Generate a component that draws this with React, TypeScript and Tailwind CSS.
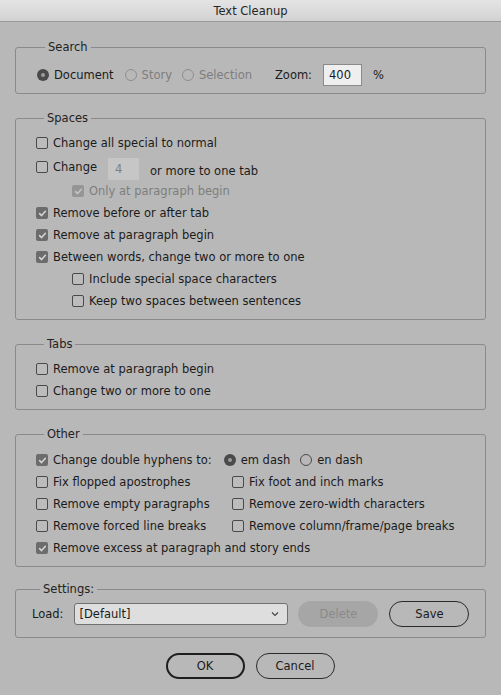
import React from "react";

const font = { fontFamily: '"DejaVu Sans", "Liberation Sans", sans-serif' };

function Check({ checked = false, disabled = false }: { checked?: boolean; disabled?: boolean }) {
  if (checked) {
    return (
      <span
        className={`flex h-[12px] w-[12px] shrink-0 items-center justify-center rounded-[2px] ${
          disabled ? "bg-[#959595]" : "bg-[#6c6c6c]"
        }`}
      >
        <svg width="9" height="9" viewBox="0 0 9 9">
          <path
            d="M1.6 4.6 L3.6 6.6 L7.4 2.2"
            fill="none"
            stroke={disabled ? "#c4c4c4" : "#d6d6d6"}
            strokeWidth="1.5"
            strokeLinecap="round"
            strokeLinejoin="round"
          />
        </svg>
      </span>
    );
  }
  return (
    <span
      className={`block h-[12px] w-[12px] shrink-0 rounded-[2px] border bg-[#bcbcbc] ${
        disabled ? "border-[#8c8c8c]" : "border-[#4a4a4a]"
      }`}
    />
  );
}

function Radio({ on = false, disabled = false }: { on?: boolean; disabled?: boolean }) {
  if (on) {
    return (
      <span className="flex h-[12px] w-[12px] shrink-0 items-center justify-center rounded-full bg-[#4a4a4a]">
        <span className="block h-[4px] w-[4px] rounded-full bg-[#9c9c9c]" />
      </span>
    );
  }
  return (
    <span
      className={`block h-[12px] w-[12px] shrink-0 rounded-full border ${
        disabled ? "border-[#8e8e8e]" : "border-[#4a4a4a]"
      }`}
    />
  );
}

function Row({
  checked,
  disabled,
  label,
  indent,
}: {
  checked?: boolean;
  disabled?: boolean;
  label: string;
  indent?: boolean;
}) {
  return (
    <div className={`flex h-[22px] items-center gap-[5px] ${indent ? "pl-[36px]" : ""}`}>
      <Check checked={checked} disabled={disabled} />
      <span className={disabled ? "text-[#7e7e7e]" : "text-[#1b1b1b]"}>{label}</span>
    </div>
  );
}

function Group({
  title,
  children,
  className = "",
}: {
  title: string;
  children: React.ReactNode;
  className?: string;
}) {
  return (
    <fieldset className={`rounded-[3px] border border-[#8a8a8a] ${className}`}>
      <legend className="ml-[8px] px-[3px] text-[11.5px] leading-[14px] text-[#222]">{title}</legend>
      {children}
    </fieldset>
  );
}

export default function App() {
  return (
    <div className="h-[695px] w-[501px] overflow-hidden bg-[#b8b8b8] text-[11.5px] leading-[14px]" style={font}>
      <div className="flex h-[22px] items-center justify-center border-b border-[#999] bg-gradient-to-b from-[#e4e4e4] to-[#d2d2d2] text-[11.5px] text-[#262626]">
        Text Cleanup
      </div>

      <div className="px-[15px]">
        <Group title="Search" className="mt-[18px] pb-[7px] pt-[10px] pl-[21px]">
          <div className="flex h-[22px] items-center">
            <Radio on />
            <span className="ml-[5px] text-[#1b1b1b]">Document</span>
            <span className="ml-[11px]">
              <Radio disabled />
            </span>
            <span className="ml-[5px] text-[#7e7e7e]">Story</span>
            <span className="ml-[10px]">
              <Radio disabled />
            </span>
            <span className="ml-[5px] text-[#7e7e7e]">Selection</span>
            <span className="ml-[23px] text-[#1b1b1b]">Zoom:</span>
            <span className="ml-[11px] flex h-[22px] w-[39px] items-center border border-[#8a8a8a] bg-[#efefef] pl-[5px] text-[#1b1b1b]">
              400
            </span>
            <span className="ml-[11px] text-[#1b1b1b]">%</span>
          </div>
        </Group>

        <Group title="Spaces" className="mt-[17px] pb-[7px] pt-[7px] pl-[20px]">
          <Row label="Change all special to normal" />
          <div className="flex h-[26px] items-start">
            <div className="mt-[6px] flex items-center gap-[5px]">
              <Check />
              <span className="text-[#1b1b1b]">Change</span>
            </div>
            <span className="ml-[11px] mt-[4px] flex h-[22px] w-[31px] items-center bg-[#c6c6c6] pl-[7px] text-[#7e7e7e]">
              4
            </span>
            <span className="ml-[11px] mt-[10px] text-[#1b1b1b]">or more to one tab</span>
          </div>
          <Row label="Only at paragraph begin" checked disabled indent />
          <Row label="Remove before or after tab" checked />
          <Row label="Remove at paragraph begin" checked />
          <Row label="Between words, change two or more to one" checked />
          <Row label="Include special space characters" indent />
          <Row label="Keep two spaces between sentences" indent />
        </Group>

        <Group title="Tabs" className="mt-[17px] pb-[7px] pt-[7px] pl-[20px]">
          <Row label="Remove at paragraph begin" />
          <Row label="Change two or more to one" />
        </Group>

        <Group title="Other" className="mt-[17px] pb-[7px] pt-[8px] pl-[20px]">
          <div className="flex h-[22px] items-center">
            <Check checked />
            <span className="ml-[5px] text-[#1b1b1b]">Change double hyphens to:</span>
            <span className="ml-[12px]">
              <Radio on />
            </span>
            <span className="ml-[5px] text-[#1b1b1b]">em dash</span>
            <span className="ml-[10px]">
              <Radio />
            </span>
            <span className="ml-[5px] text-[#1b1b1b]">en dash</span>
          </div>
          <div className="grid grid-cols-[196px_1fr]">
            <Row label="Fix flopped apostrophes" />
            <Row label="Fix foot and inch marks" />
            <Row label="Remove empty paragraphs" />
            <Row label="Remove zero-width characters" />
            <Row label="Remove forced line breaks" />
            <Row label="Remove column/frame/page breaks" />
          </div>
          <Row label="Remove excess at paragraph and story ends" checked />
        </Group>

        <Group title="Settings:" className="mt-[15px] pb-[10px] pt-[5px] pl-[16px] pr-[16px]">
          <div className="flex h-[26px] items-center">
            <span className="text-[#1b1b1b]">Load:</span>
            <div className="ml-[11px] flex h-[22px] w-[214px] items-center justify-between rounded-[3px] border border-[#707070] bg-[#dedede] pl-[4px] pr-[8px] text-[#1b1b1b]">
              <span>[Default]</span>
              <svg width="8" height="6" viewBox="0 0 8 6">
                <path d="M1 1.5 L4 4.5 L7 1.5" fill="none" stroke="#444" strokeWidth="1.1" />
              </svg>
            </div>
            <div className="ml-[10px] flex h-[26px] w-[80px] items-center justify-center rounded-full bg-[#a6a6a6] text-[#8a8a8a]">
              Delete
            </div>
            <div className="ml-[11px] flex h-[26px] w-[80px] items-center justify-center rounded-full border border-[#2a2a2a] text-[#1b1b1b]">
              Save
            </div>
          </div>
        </Group>

        <div className="mt-[15px] flex justify-center gap-[11px] pr-[1px]">
          <div className="flex h-[26px] w-[79px] items-center justify-center rounded-full border-2 border-[#1e1e1e] text-[#1b1b1b]">
            OK
          </div>
          <div className="flex h-[26px] w-[79px] items-center justify-center rounded-full border border-[#2a2a2a] text-[#1b1b1b]">
            Cancel
          </div>
        </div>
      </div>
    </div>
  );
}
